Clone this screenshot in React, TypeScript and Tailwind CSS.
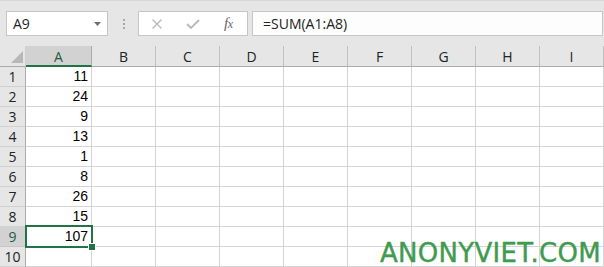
import React from "react";

const cols = ["A", "B", "C", "D", "E", "F", "G", "H", "I"];
const widths = [66, 64, 64, 64, 64, 64, 64, 64, 64];
const values = ["11", "24", "9", "13", "1", "8", "26", "15", "107", ""];

export default function App() {
  return (
    <div className="relative w-[604px] h-[267px] overflow-hidden bg-[#e6e6e6] font-['Open_Sans',sans-serif] text-[#222]">
      {/* formula bar */}
      <div className="h-[46px] border-t border-[#d6d6d6] flex items-start pt-[10px] pl-[6px] pr-[1px]">
        <div className="w-[102px] h-[25px] border border-[#c6c6c6] bg-white flex items-center pl-[6px] pr-[6px] text-[14px] text-[#222]">
          <span className="flex-1 leading-none">A9</span>
          <svg width="7" height="4" viewBox="0 0 7 4">
            <path d="M0 0 L7 0 L3.5 4 Z" fill="#6f6f6f" />
          </svg>
        </div>
        <div className="w-[30px] h-[25px] flex flex-col items-center justify-center gap-[2px] pl-[1px]">
          <div className="w-[2px] h-[2px] bg-[#a8a8a8]" />
          <div className="w-[2px] h-[2px] bg-[#a8a8a8]" />
          <div className="w-[2px] h-[2px] bg-[#a8a8a8]" />
        </div>
        <div className="w-[110px] h-[25px] border border-[#c6c6c6] bg-white flex items-center">
          <svg className="ml-[12px]" width="12" height="10" viewBox="0 0 12 10">
            <path d="M1.5 0.5 L10.5 9.5 M10.5 0.5 L1.5 9.5" stroke="#b9b9b9" strokeWidth="1.4" fill="none" />
          </svg>
          <svg className="ml-[23px]" width="14" height="10" viewBox="0 0 14 10">
            <path d="M1 5 L5 9 L13 1" stroke="#b9b9b9" strokeWidth="1.8" fill="none" />
          </svg>
          <span className="ml-[24px] font-['Liberation_Serif',serif] italic text-[15px] leading-none text-[#666] tracking-[-0.5px]">
            f<span className="text-[12px]">x</span>
          </span>
        </div>
        <div className="flex-1 ml-[4px] h-[25px] border border-[#c6c6c6] bg-[#fdfdfd] flex items-center pl-[10px] text-[14px] text-[#222]">
          =SUM(A1:A8)
        </div>
      </div>

      {/* header row */}
      <div className="flex h-[21px]">
        <div className="relative w-[26px] h-[21px] border-b border-[#ababab] border-r border-r-[#d0d0d0]">
          <svg className="absolute left-[11px] top-[5px]" width="12" height="12" viewBox="0 0 12 12">
            <path d="M12 0 L12 12 L0 12 Z" fill="#b8b8b8" />
          </svg>
        </div>
        {cols.map((c, i) => (
          <div
            key={c}
            style={{ width: widths[i] }}
            className={
              i === 0
                ? "h-[21px] flex items-center justify-center bg-[#d2d2d2] border-r border-r-[#ababab] border-b-2 border-b-[#217346] text-[14px] text-[#1f5c3a] pt-[1px]"
                : "h-[21px] flex items-center justify-center border-r border-r-[#c0c0c0] border-b border-b-[#ababab] text-[14px] text-[#222]"
            }
          >
            {c}
          </div>
        ))}
      </div>

      {/* data rows */}
      {values.map((v, r) => (
        <div key={r} className="flex h-[20px]">
          <div
            className={
              r === 8
                ? "w-[26px] h-[20px] flex items-center justify-center bg-[#d2d2d2] border-r border-r-[#ababab] border-b border-b-[#c6c6c6] text-[14px] text-[#1f5c3a]"
                : "w-[26px] h-[20px] flex items-center justify-center bg-[#e6e6e6] border-r border-r-[#ababab] border-b border-b-[#d0d0d0] text-[14px] text-[#222]"
            }
          >
            {r + 1}
          </div>
          {cols.map((c, i) => (
            <div
              key={c}
              style={{ width: widths[i] }}
              className="h-[20px] bg-white border-r border-b border-[#d4d4d4] flex items-center justify-end pr-[3px] font-['Liberation_Sans',sans-serif] text-[14px] text-black"
            >
              {i === 0 ? v : ""}
            </div>
          ))}
        </div>
      ))}

      {/* selection */}
      <div className="absolute left-[25px] top-[225px] w-[68px] h-[23px] border-2 border-[#217346]" />
      <div className="absolute left-[89px] top-[244px] w-[6px] h-[6px] bg-[#217346] outline outline-1 outline-white" />

      {/* watermark */}
      <div className="absolute left-[380px] top-[240px] font-['DejaVu_Sans',sans-serif] text-[26px] leading-none tracking-[0.3px] text-[#3f9b50] whitespace-nowrap [-webkit-text-stroke:0.4px_#3f9b50]">
        ANONYVIET.COM
      </div>
    </div>
  );
}
